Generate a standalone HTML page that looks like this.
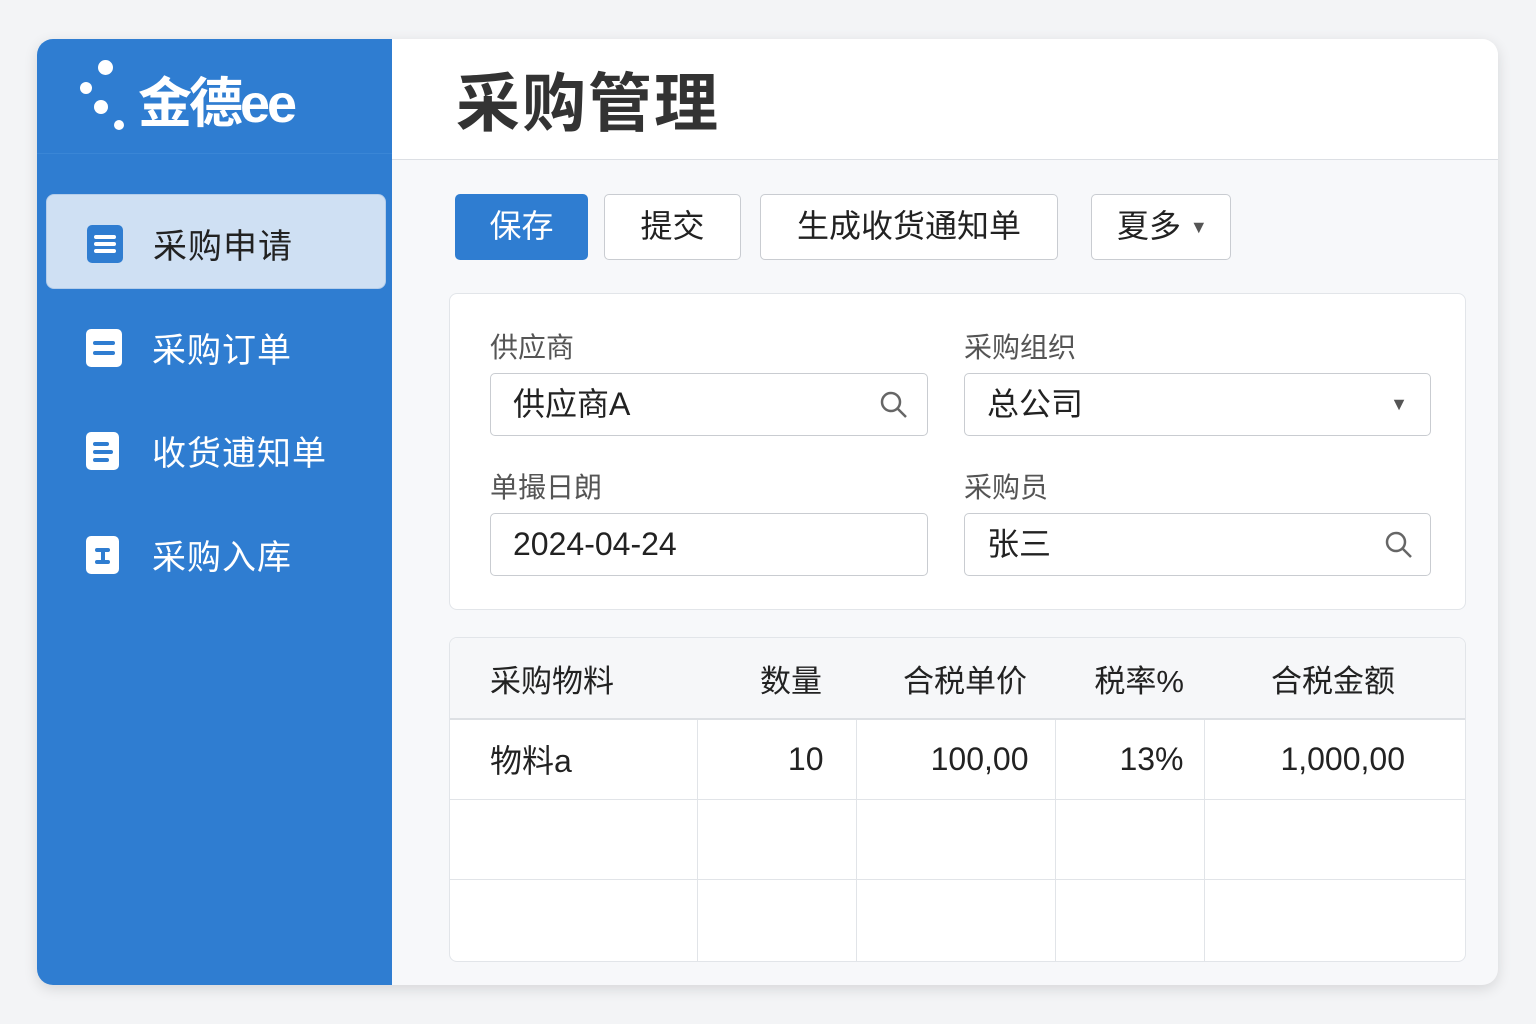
<!DOCTYPE html>
<html><head><meta charset="utf-8"><style>
*{box-sizing:border-box;margin:0;padding:0}
body{width:1536px;height:1024px;background:#f3f4f6;font-family:"Liberation Sans","Noto Sans CJK SC",sans-serif;position:relative;overflow:hidden;color:#222}
.card{position:absolute;left:37px;top:39px;width:1461px;height:946px;border-radius:16px;overflow:hidden;background:#f7f8fa;box-shadow:0 4px 14px rgba(0,0,0,.12)}
.side{position:absolute;left:0;top:0;width:355px;height:946px;background:#2f7dd1}
.logo{position:absolute;left:0;top:0;width:355px;height:115px;border-bottom:1px solid #3a86d6}
.dot{position:absolute;background:#fff;border-radius:50%}
.brand{position:absolute;left:101px;top:20px;color:#fff;font-size:54px;font-weight:bold;letter-spacing:-3px}
.item{position:absolute;left:9px;width:340px;height:95px;color:#fff;font-size:34px}
.item .t{position:absolute;left:106px;top:24px;letter-spacing:1px}
.item.act{background:#cfe0f3;border-radius:8px;color:#222;border:1px solid #b4cdea}
.ic{position:absolute;left:40px;top:30px;width:36px;height:38px;border-radius:5px;background:#fff}
.act .ic{background:#2f7dd1}
.ic i{position:absolute;left:7px;height:4px;background:#2f7dd1;border-radius:2px}
.act .ic i{background:#fff}
.main{position:absolute;left:355px;top:0;right:0;bottom:0}
.head{position:absolute;left:0;top:0;right:0;height:121px;background:#fff;border-bottom:1px solid #dcdfe4}
.head h1{position:absolute;left:64px;top:14px;font-size:64px;font-weight:bold;color:#333;letter-spacing:2px}
.btn{position:absolute;top:155px;height:66px;border:1px solid #c9ccd1;border-radius:5px;background:#fff;font-size:32px;line-height:62px;text-align:center;color:#222}
.panel{position:absolute;left:57px;width:1017px;background:#fff;border:1px solid #e2e5e9;border-radius:8px}
.lbl{position:absolute;font-size:28px;color:#555}
.inp{position:absolute;height:63px;border:1px solid #c9ccd1;border-radius:5px;font-size:32px;line-height:60px;padding-left:22px;color:#222}
table{border-collapse:collapse;width:1015px}
th{height:81px;background:#f6f7f9;font-weight:normal;font-size:31px;border-bottom:2px solid #dde0e4;color:#222}
td{height:80px;border-right:1px solid #e1e4e8;border-bottom:1px solid #e1e4e8;font-size:32px;padding:0 22px}
td:last-child{border-right:none}
</style></head><body>
<div class="card">
 <div class="side">
  <div class="logo">
   <div class="dot" style="left:61px;top:21px;width:15px;height:15px"></div>
   <div class="dot" style="left:43px;top:43px;width:12px;height:12px"></div>
   <div class="dot" style="left:57px;top:61px;width:14px;height:14px"></div>
   <div class="dot" style="left:77px;top:81px;width:10px;height:10px"></div>
   <div class="brand">金德ee</div>
  </div>
  <div class="item act" style="top:155px"><div class="ic"><i style="top:10px;width:22px"></i><i style="top:17px;width:22px"></i><i style="top:24px;width:22px"></i></div><span class="t">采购申请</span></div>
  <div class="item" style="top:260px"><div class="ic"><i style="top:12px;width:22px"></i><i style="top:22px;width:22px"></i></div><span class="t">采购订单</span></div>
  <div class="item" style="top:363px"><div class="ic" style="width:33px"><i style="top:10px;width:16px"></i><i style="top:18px;width:20px"></i><i style="top:26px;width:16px"></i></div><span class="t">收货逋知单</span></div>
  <div class="item" style="top:467px"><div class="ic" style="width:33px"><i style="top:12px;left:9px;width:15px"></i><i style="top:12px;left:15px;width:4px;height:14px"></i><i style="top:24px;left:9px;width:15px"></i></div><span class="t">采购入库</span></div>
 </div>
 <div class="main">
  <div class="head"><h1>采购管理</h1></div>
  <div class="btn" style="left:63px;width:133px;background:#2f7dd1;border-color:#2f7dd1;color:#fff">保存</div>
  <div class="btn" style="left:212px;width:137px">提交</div>
  <div class="btn" style="left:368px;width:298px">生成收货通知单</div>
  <div class="btn" style="left:699px;width:140px;text-align:left;padding-left:25px">夏多 <span style="font-size:18px;color:#555;vertical-align:4px">▼</span></div>
  <div class="panel" style="top:254px;height:317px">
   <div class="lbl" style="left:40px;top:32px">供应商</div>
   <div class="inp" style="left:40px;top:79px;width:438px">供应商A<svg style="position:absolute;right:18px;top:16px" width="30" height="30" viewBox="0 0 30 30"><circle cx="12" cy="12" r="9" fill="none" stroke="#666" stroke-width="2.5"/><line x1="19" y1="19" x2="27" y2="27" stroke="#666" stroke-width="2.5"/></svg></div>
   <div class="lbl" style="left:514px;top:32px">采购组织</div>
   <div class="inp" style="left:514px;top:79px;width:467px">总公司<span style="position:absolute;right:22px;top:0;font-size:18px;color:#555">▼</span></div>
   <div class="lbl" style="left:40px;top:172px">单撮日朗</div>
   <div class="inp" style="left:40px;top:219px;width:438px">2024-04-24</div>
   <div class="lbl" style="left:514px;top:172px">采购员</div>
   <div class="inp" style="left:514px;top:219px;width:467px">张三<svg style="position:absolute;right:16px;top:16px" width="30" height="30" viewBox="0 0 30 30"><circle cx="12" cy="12" r="9" fill="none" stroke="#666" stroke-width="2.5"/><line x1="19" y1="19" x2="27" y2="27" stroke="#666" stroke-width="2.5"/></svg></div>
  </div>
  <div class="panel" style="top:598px;height:325px;overflow:hidden">
   <table>
    <tr><th style="width:247px;text-align:left;padding-left:40px">采购物料</th><th style="width:159px;text-align:right;padding-right:34px">数量</th><th style="width:199px;text-align:right;padding-right:28px">合税单价</th><th style="width:149px;text-align:right;padding-right:20px">税率%</th><th style="padding-right:70px;text-align:right">合税金额</th></tr>
    <tr><td style="padding-left:40px">物料a</td><td style="text-align:right;padding-right:32px">10</td><td style="text-align:right;padding-right:26px">100,00</td><td style="text-align:right;padding-right:20px">13%</td><td style="text-align:right;padding-right:60px">1,000,00</td></tr>
    <tr><td></td><td></td><td></td><td></td><td></td></tr>
    <tr><td style="height:84px"></td><td></td><td></td><td></td><td></td></tr>
   </table>
  </div>
 </div>
</div>
</body></html>
